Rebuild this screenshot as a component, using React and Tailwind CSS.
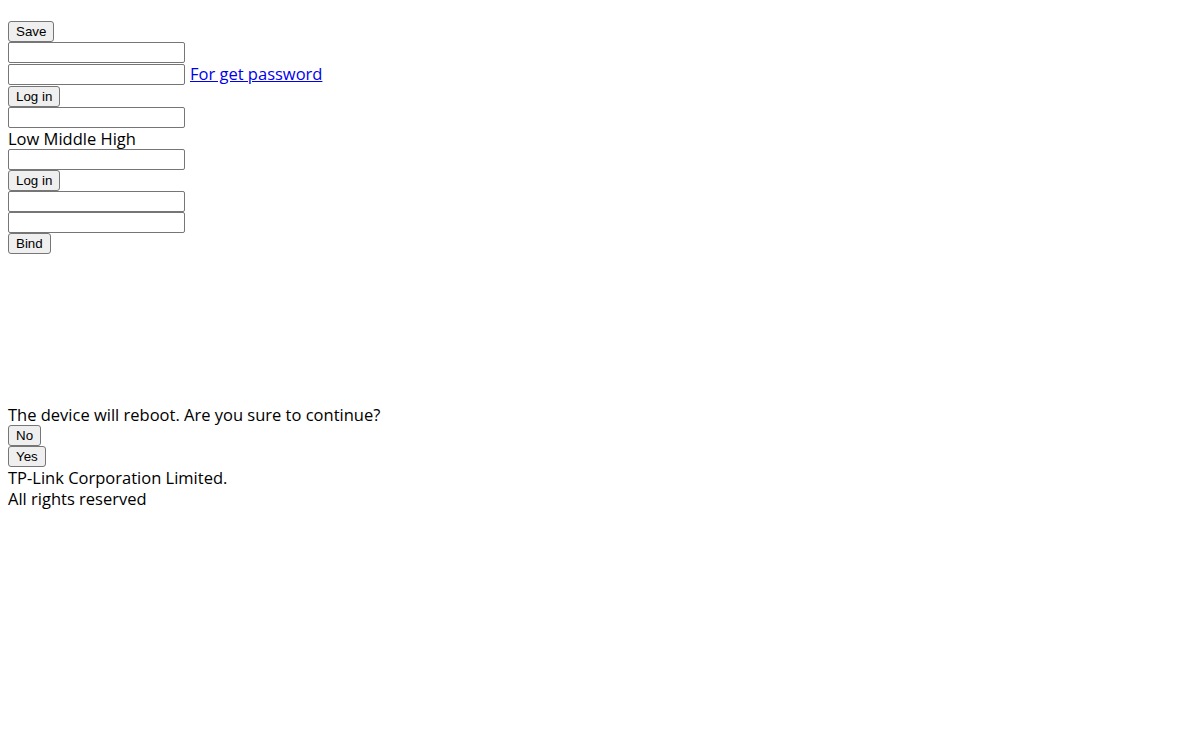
import React from 'react';

const btn =
  "block h-[21px] px-[7px] bg-[#efefef] border border-[#767676] rounded-[3px] text-[13.33px] leading-[19px] text-black font-['Liberation_Sans',Arial,sans-serif]";
const field = "block w-[177px] h-[21px] border border-[#767676] rounded-[2px] bg-white";

const Field = () => <input type="text" className={field} />;

export default function App() {
  return (
    <div className="min-h-screen bg-white text-black px-2 pt-[21px] text-[16.5px] leading-[21px] font-['Open_Sans','Noto_Sans',sans-serif]">
      {/* login / settings forms */}
      <button className={btn}>Save</button>
      <Field />
      <div className="flex items-start gap-[5px] h-[22px] mt-[1px]">
        <Field />
        <a href="#" className="text-[#0000ee] underline -mt-[1px]">For get password</a>
      </div>
      <button className={btn}>Log in</button>
      <Field />
      <div className="h-[21px]">Low Middle High</div>
      <Field />
      <button className={btn}>Log in</button>
      <Field />
      <Field />
      <button className={btn}>Bind</button>

      {/* reboot dialog */}
      <div className="mt-[150px]">The device will reboot. Are you sure to continue?</div>
      <button className={btn}>No</button>
      <button className={btn}>Yes</button>

      {/* footer */}
      <div>TP-Link Corporation Limited.</div>
      <div>All rights reserved</div>
    </div>
  );
}
